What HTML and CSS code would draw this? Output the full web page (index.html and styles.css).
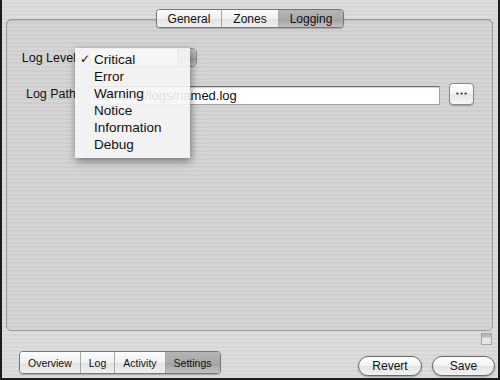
FILE: index.html
```html
<!DOCTYPE html>
<html lang="en">
<head>
  <meta charset="UTF-8" />
  <title>Logging settings</title>
  <link rel="stylesheet" href="styles.css">
</head>
<body>
  <div class="window">
    <div class="tabs tabs-top">
      <span class="seg">General</span>
      <span class="seg">Zones</span>
      <span class="seg on">Logging</span>
    </div>

    <div class="group">
      <div class="row row-level">
        <label class="label">Log Level</label>
        <div class="popup">
          <span class="popup-arrows"></span>
        </div>
      </div>

      <div class="row row-path">
        <label class="label">Log Path</label>
        <div class="field">/usr/local/logs/named.log</div>
        <button class="dots">•••</button>
      </div>

      <!-- open popup menu for Log Level -->
      <ul class="menu">
        <li class="checked">Critical</li>
        <li>Error</li>
        <li>Warning</li>
        <li>Notice</li>
        <li>Information</li>
        <li>Debug</li>
      </ul>
    </div>

    <div class="grip-row">
      <svg class="grip" width="11" height="12" viewBox="0 0 11 12">
        <rect x="0.5" y="0.5" width="10" height="11" fill="#e6e6e6" stroke="#a6a6a6"/>
        <rect x="1" y="1" width="9" height="3" fill="#b9b9b9"/>
        <line x1="1" y1="4.5" x2="10" y2="4.5" stroke="#d0d0d0"/>
      </svg>
    </div>

    <div class="footer">
      <div class="tabs tabs-bottom">
        <span class="seg">Overview</span>
        <span class="seg">Log</span>
        <span class="seg">Activity</span>
        <span class="seg on">Settings</span>
      </div>
      <div class="buttons">
        <button class="pill revert">Revert</button>
        <button class="pill save">Save</button>
      </div>
    </div>
  </div>
</body>
</html>
```

FILE: styles.css
```css
body {
  margin: 0;
  background: #1c1c1c;
}

.window {
  width: 500px;
  height: 380px;
  box-sizing: border-box;
  border: 2px solid #1c1c1c;
  border-top: 0;
  padding-top: 9px;
  display: flex;
  flex-direction: column;
  background: repeating-linear-gradient(to bottom, #dddddd 0, #dddddd 2px, #d6d6d6 2px, #d6d6d6 4px);
  font-family: "Liberation Sans", Arial, sans-serif;
  color: #111;
}

/* segmented tabs */
.tabs {
  display: flex;
  border: 1px solid #777;
  border-radius: 4px;
  overflow: hidden;
  box-shadow: 0 1px 1px rgba(0, 0, 0, 0.2);
}

.seg {
  display: flex;
  align-items: center;
  background: linear-gradient(#fcfcfc, #f1f1f1 50%, #e2e2e2 51%, #efefef);
  border-left: 1px solid #a9a9a9;
}

.seg:first-child {
  border-left: 0;
}

.seg.on {
  background: linear-gradient(#b4b4b4, #aaaaaa 50%, #9f9f9f 51%, #c2c2c2);
}

.tabs-top {
  align-self: center;
  height: 17px;
  position: relative;
  z-index: 1;
  font-size: 12px;
}

.tabs-top .seg {
  padding: 0 11px;
}

.tabs-bottom {
  height: 21px;
  margin-top: 6px;
  font-size: 10.5px;
}

.tabs-bottom .seg {
  padding: 0 8px;
}

/* group box */
.group {
  position: relative;
  height: 312px;
  box-sizing: border-box;
  margin: -9px 5px 0 4px;
  padding-top: 28px;
  border: 1px solid #9b9b9b;
  border-radius: 5px;
  background: rgba(0, 0, 0, 0.035);
  box-shadow: inset 0 1px 1px rgba(0, 0, 0, 0.12);
}

.row {
  display: flex;
  align-items: center;
}

.label {
  width: 69px;
  margin-right: 13px;
  text-align: right;
  font-size: 12.5px;
}

.row-level {
  height: 19px;
}

.popup {
  width: 108px;
  height: 19px;
  box-sizing: border-box;
  display: flex;
  border: 1px solid #8a8a8a;
  border-radius: 5px;
  overflow: hidden;
  background: linear-gradient(#ffffff, #f3f3f3 50%, #e5e5e5 51%, #f4f4f4);
}

.popup-arrows {
  margin-left: auto;
  width: 18px;
  background: linear-gradient(#bdbdbd, #b0b0b0 50%, #a2a2a2 51%, #c4c4c4);
  border-left: 1px solid #8e8e8e;
}

.row-path {
  height: 22px;
  margin-top: 16px;
  align-items: flex-end;
}

.row-path .label {
  align-self: center;
}

.field {
  width: 351px;
  height: 19px;
  box-sizing: border-box;
  padding-left: 3px;
  border: 1px solid #a3a3a3;
  border-top-color: #6f6f6f;
  background: #fff;
  box-shadow: inset 0 1px 1px rgba(0, 0, 0, 0.18);
  font-size: 13px;
  line-height: 17px;
}

.dots {
  width: 25px;
  height: 22px;
  margin-left: 9px;
  padding: 0;
  border: 1px solid #8a8a8a;
  border-radius: 4px;
  background: linear-gradient(#ffffff, #f4f4f4 50%, #e6e6e6 51%, #f6f6f6);
  box-shadow: 0 1px 1px rgba(0, 0, 0, 0.25);
  font-family: "DejaVu Sans", sans-serif;
  font-size: 7px;
  color: #222;
}

/* popup menu */
.menu {
  position: absolute;
  left: 68px;
  top: 28px;
  width: 115px;
  box-sizing: border-box;
  margin: 0;
  padding: 3px 0 5px;
  list-style: none;
  background: rgba(246, 246, 246, 0.9);
  box-shadow: 1px 3px 8px rgba(0, 0, 0, 0.45);
  font-size: 13.5px;
}

.menu li {
  position: relative;
  height: 17px;
  line-height: 17px;
  padding-left: 19px;
}

.menu li.checked::before {
  content: "✓";
  position: absolute;
  left: 5px;
  font-family: "DejaVu Sans", sans-serif;
  font-size: 12px;
  font-weight: bold;
}

/* resize grip */
.grip-row {
  height: 14px;
  display: flex;
  justify-content: flex-end;
  padding-right: 6px;
}

.grip {
  margin-top: 2px;
}

/* bottom bar */
.footer {
  flex: 1;
  display: flex;
  align-items: flex-start;
  padding: 0 3px 0 17px;
}

.buttons {
  display: flex;
  gap: 10px;
  margin-left: auto;
  margin-top: 11px;
}

.pill {
  height: 20px;
  padding: 0;
  border: 1px solid #6a6a6a;
  border-radius: 10px;
  background: linear-gradient(#ffffff, #f3f3f3 50%, #e3e3e3 51%, #f3f3f3);
  box-shadow: 0 1px 2px rgba(0, 0, 0, 0.3);
  font-family: inherit;
  font-size: 12px;
  color: #111;
}

.revert {
  width: 64px;
}

.save {
  width: 63px;
}
```
